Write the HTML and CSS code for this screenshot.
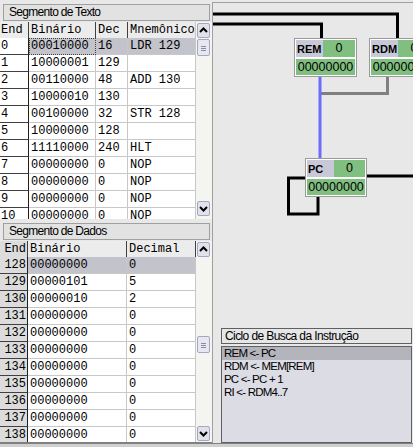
FILE: index.html
```html
<!DOCTYPE html>
<html>
<head>
<meta charset="utf-8">
<link rel="stylesheet" href="styles.css">
</head>
<body>
<div class="main">
  <div class="left">
    <section class="panel texto">
      <div class="ptitle">Segmento de Texto</div>
      <div class="tablewrap">
        <div class="grid">
          <div class="row head"><div class="c end">End</div><div class="c bin">Binário</div><div class="c dec">Dec</div><div class="c mne">Mnemônico</div></div>
          <div class="row sel"><div class="c end">0</div><div class="c bin focus">00010000</div><div class="c dec">16</div><div class="c mne">LDR 129</div></div>
          <div class="row"><div class="c end">1</div><div class="c bin">10000001</div><div class="c dec">129</div><div class="c mne"></div></div>
          <div class="row"><div class="c end">2</div><div class="c bin">00110000</div><div class="c dec">48</div><div class="c mne">ADD 130</div></div>
          <div class="row"><div class="c end">3</div><div class="c bin">10000010</div><div class="c dec">130</div><div class="c mne"></div></div>
          <div class="row"><div class="c end">4</div><div class="c bin">00100000</div><div class="c dec">32</div><div class="c mne">STR 128</div></div>
          <div class="row"><div class="c end">5</div><div class="c bin">10000000</div><div class="c dec">128</div><div class="c mne"></div></div>
          <div class="row"><div class="c end">6</div><div class="c bin">11110000</div><div class="c dec">240</div><div class="c mne">HLT</div></div>
          <div class="row"><div class="c end">7</div><div class="c bin">00000000</div><div class="c dec">0</div><div class="c mne">NOP</div></div>
          <div class="row"><div class="c end">8</div><div class="c bin">00000000</div><div class="c dec">0</div><div class="c mne">NOP</div></div>
          <div class="row"><div class="c end">9</div><div class="c bin">00000000</div><div class="c dec">0</div><div class="c mne">NOP</div></div>
          <div class="row"><div class="c end">10</div><div class="c bin">00000000</div><div class="c dec">0</div><div class="c mne">NOP</div></div>
        </div>
        <div class="sbar">
          <div class="sbtn"><svg width="11" height="13" viewBox="0 0 11 13"><polyline points="2,8 5.5,4.5 9,8" fill="none" stroke="#000" stroke-width="2"/></svg></div>
          <div class="sbtn thumb"><svg width="11" height="14" viewBox="0 0 11 14"><path d="M3 5.5h5M3 7.5h5M3 9.5h5" stroke="#8a8ca0" stroke-width="1"/></svg></div>
          <div class="sfill"></div>
          <div class="sbtn"><svg width="11" height="13" viewBox="0 0 11 13"><polyline points="2,5 5.5,8.5 9,5" fill="none" stroke="#000" stroke-width="2"/></svg></div>
        </div>
      </div>
    </section>
    <section class="panel dados">
      <div class="ptitle">Segmento de Dados</div>
      <div class="tablewrap">
        <div class="grid">
          <div class="row head"><div class="c end">End</div><div class="c bin">Binário</div><div class="c decl">Decimal</div></div>
          <div class="row sel"><div class="c end">128</div><div class="c bin">00000000</div><div class="c decl">0</div></div>
          <div class="row"><div class="c end">129</div><div class="c bin">00000101</div><div class="c decl">5</div></div>
          <div class="row"><div class="c end">130</div><div class="c bin">00000010</div><div class="c decl">2</div></div>
          <div class="row"><div class="c end">131</div><div class="c bin">00000000</div><div class="c decl">0</div></div>
          <div class="row"><div class="c end">132</div><div class="c bin">00000000</div><div class="c decl">0</div></div>
          <div class="row"><div class="c end">133</div><div class="c bin">00000000</div><div class="c decl">0</div></div>
          <div class="row"><div class="c end">134</div><div class="c bin">00000000</div><div class="c decl">0</div></div>
          <div class="row"><div class="c end">135</div><div class="c bin">00000000</div><div class="c decl">0</div></div>
          <div class="row"><div class="c end">136</div><div class="c bin">00000000</div><div class="c decl">0</div></div>
          <div class="row"><div class="c end">137</div><div class="c bin">00000000</div><div class="c decl">0</div></div>
          <div class="row"><div class="c end">138</div><div class="c bin">00000000</div><div class="c decl">0</div></div>
        </div>
        <div class="sbar">
          <div class="sbtn"><svg width="11" height="13" viewBox="0 0 11 13"><polyline points="2,8 5.5,4.5 9,8" fill="none" stroke="#000" stroke-width="2"/></svg></div>
          <div class="sgap"></div>
          <div class="sbtn thumb"><svg width="11" height="14" viewBox="0 0 11 14"><path d="M3 5.5h5M3 7.5h5M3 9.5h5" stroke="#8a8ca0" stroke-width="1"/></svg></div>
          <div class="sfill"></div>
          <div class="sbtn"><svg width="11" height="13" viewBox="0 0 11 13"><polyline points="2,5 5.5,8.5 9,5" fill="none" stroke="#000" stroke-width="2"/></svg></div>
        </div>
      </div>
    </section>
  </div>
  <div class="canvas">
    <div class="diagram">
      <svg class="wires" width="200" height="325" viewBox="0 0 200 325">
        <polyline points="0,11 184.5,11 184.5,35" fill="none" stroke="#000" stroke-width="3"/>
        <polyline points="0,21 108.5,21 108.5,35" fill="none" stroke="#000" stroke-width="3"/>
        <polyline points="174.5,74 174.5,90.5 107,90.5" fill="none" stroke="#808080" stroke-width="3"/>
        <line x1="107" y1="74" x2="107" y2="155" stroke="#6b6bff" stroke-width="3"/>
        <line x1="154" y1="173" x2="200" y2="173" stroke="#000" stroke-width="3"/>
        <polyline points="92,175 75.5,175 75.5,211 105,211 105,194" fill="none" stroke="#000" stroke-width="3"/>
      </svg>
      <div class="reg rem">
        <div class="rl">REM</div><div class="rv">0</div><div class="rb">00000000</div>
      </div>
      <div class="reg rdm">
        <div class="rl">RDM</div><div class="rv">0</div><div class="rb">00000000</div>
      </div>
      <div class="reg pc">
        <div class="rl">PC</div><div class="rv">0</div><div class="rb">00000000</div>
      </div>
    </div>
    <div class="cycle">
      <div class="ctitle">Ciclo de Busca da Instrução</div>
      <div class="clist">
        <div class="citem sel">REM &lt;- PC</div>
        <div class="citem">RDM &lt;- MEM[REM]</div>
        <div class="citem">PC &lt;- PC + 1</div>
        <div class="citem">RI &lt;- RDM4..7</div>
      </div>
    </div>
  </div>
</div>
<div class="bottom"></div>
</body>
</html>
```
FILE: styles.css
```css
* { box-sizing: border-box; }
html, body { margin: 0; padding: 0; }
body {
  width: 413px;
  height: 447px;
  overflow: hidden;
  background: #e8e8e8;
  font-family: "Liberation Sans", Arial, sans-serif;
  display: flex;
  flex-direction: column;
}
.main { display: flex; height: 443px; }
.left {
  width: 212px;
  display: flex;
  flex-direction: column;
  background: #e8e8e8;
}
.panel { display: flex; flex-direction: column; overflow: hidden; }
.texto { height: 219px; }
.dados { flex: 1; border-bottom: 1px solid #808080; }
.ptitle {
  margin: 4px 2px 1px 3px;
  height: 17px;
  flex: none;
  border: 1px solid #a0a0a0;
  background: #e2e2e2;
  font-size: 12px;
  letter-spacing: -0.7px;
  line-height: 15px;
  padding-left: 5px;
  color: #000;
}
.texto .ptitle { margin-top: 4px; }
.dados .ptitle { margin-top: 4px; }
.tablewrap { display: flex; flex: 1; min-height: 0; overflow: hidden; }
.grid { width: 196px; background: #fff; overflow: hidden; flex: none; }
.row { display: flex; height: 17px; }
.c {
  height: 17px;
  border-right: 1px solid #c8c8c8;
  border-bottom: 1px solid #c8c8c8;
  font-family: "Liberation Mono", "Courier New", monospace;
  font-size: 12px;
  line-height: 16px;
  padding-left: 2px;
  white-space: nowrap;
  overflow: hidden;
  color: #000;
}
.row.head { height: 16px; }
.row.head .c {
  height: 16px;
  background: #ececec;
  border-bottom: none;
  border-right: 1px solid #404040;
  line-height: 16px;
}
.c.end { width: 29px; border-right: 1px solid #202020; border-bottom: 1px solid #404040; padding-left: 1px; }
.texto .c.bin { width: 67px; }
.texto .c.dec { width: 32px; }
.texto .c.mne { width: 68px; border-right: 1px solid #c8c8c8; }
.dados .c.end { width: 28px; background: #dcdcdc; text-align: right; padding-right: 1px; }
.dados .c.bin { width: 99px; }
.dados .c.decl { width: 69px; }
.row.sel .c:not(.end) { background: #c3c3cb; }
.c.focus { outline: 1px dotted #404040; outline-offset: -1px; }

.sbar {
  width: 16px;
  background: #f4f4f0;
  display: flex;
  flex-direction: column;
  padding: 1px 2px 1px 1px;
}
.sbtn {
  height: 15px;
  width: 13px;
  flex: none;
  border: 1px solid #a4a7c0;
  border-radius: 2px;
  background: #e0e1eb;
  display: flex;
  align-items: center;
  justify-content: center;
}
.sbtn.thumb { height: 17px; margin-top: 1px; background: #e6e7f0; }
.sgap { height: 78px; flex: none; }
.sfill { flex: 1; }
.texto .sbar .sbtn:last-child { margin-bottom: 2px; }

.canvas {
  flex: 1;
  margin-top: 2px;
  border-top: 1px solid #a0a0a0;
  border-left: 1px solid #a0a0a0;
  display: flex;
  flex-direction: column;
  background: #e8e8e8;
  overflow: hidden;
}
.diagram { position: relative; flex: 1; }
.wires { position: absolute; left: 0; top: 0; }
.reg {
  position: absolute;
  width: 63px;
  height: 39px;
  border: 1px solid #9a9a9a;
  background: #fff;
  padding: 1px;
  display: grid;
  grid-template-columns: 27px 32px;
  grid-template-rows: 17px 16px;
  gap: 2px 0;
}
.rem { left: 81px; top: 35px; }
.rdm { left: 156px; top: 35px; }
.pc { left: 92px; top: 155px; width: 62px; grid-template-columns: 27px 31px; }
.rl {
  background: #c8c8d8;
  font-weight: bold;
  font-size: 11px;
  line-height: 18px;
  padding-left: 1px;
  color: #000;
}
.rv {
  background: #80bf80;
  font-size: 12.5px;
  line-height: 17px;
  text-align: center;
  color: #000;
}
.rb {
  grid-column: 1 / 3;
  background: #80bf80;
  font-size: 12.5px;
  line-height: 16px;
  text-align: center;
  color: #000;
}
.cycle { margin: 0 1px 0 8px; flex: none; }
.ctitle {
  height: 16px;
  border: 1px solid #606060;
  background: #e6e6e6;
  font-size: 12px;
  letter-spacing: -0.6px;
  line-height: 14px;
  padding-left: 3px;
  color: #000;
}
.clist {
  margin-top: 2px;
  height: 97px;
  border: 1px solid #606060;
  background: #dcdce4;
}
.citem {
  height: 13px;
  font-size: 11.5px;
  letter-spacing: -0.8px;
  line-height: 13px;
  padding-left: 2px;
  color: #000;
  white-space: nowrap;
}
.citem.sel { background: #b4b4bc; }
.bottom { height: 4px; background: #d0d0d0; border-top: 1px solid #808080; }
```
